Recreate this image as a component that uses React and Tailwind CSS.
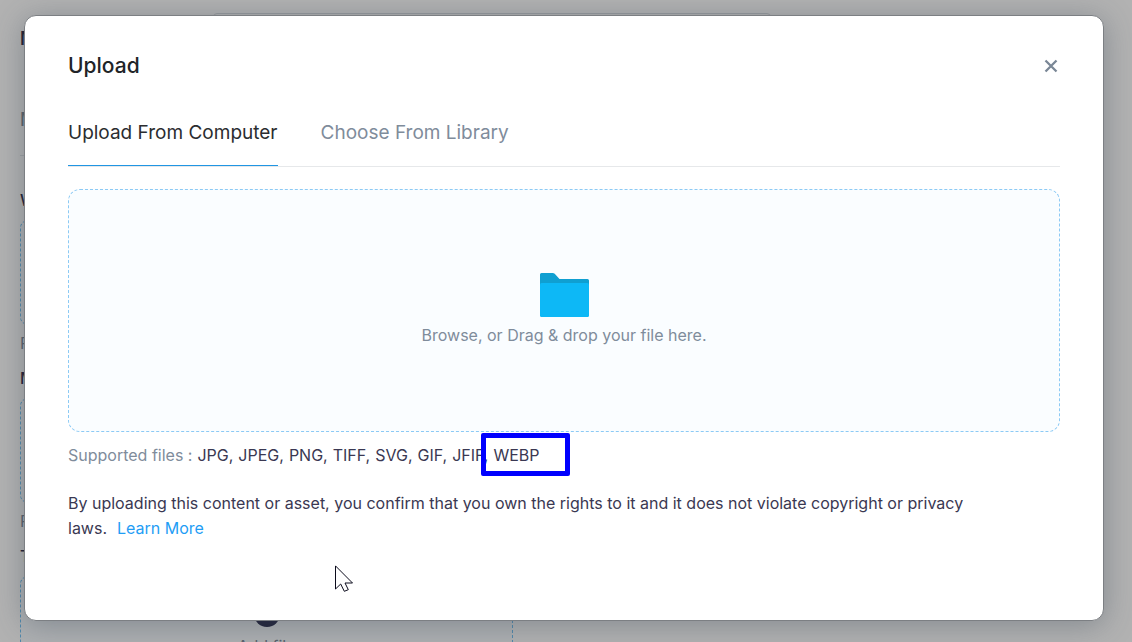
import React, { useState } from 'react';

const FILE_TYPES = ['JPG', 'JPEG', 'PNG', 'TIFF', 'SVG', 'GIF', 'JFIF'];

const TABS = [
  { id: 'computer', label: 'Upload From Computer' },
  { id: 'library', label: 'Choose From Library' },
];

function FolderIcon() {
  return (
    <svg width="49" height="44" viewBox="0 0 49 44" aria-hidden="true">
      <path d="M1.5 0h11.2c.8 0 1.400.3 2 .8L19.500 6H47.500A1.500 1.500 0 0 1 49 7.500V14H0V1.500A1.500 1.500 0 0 1 1.500 0z" fill="#0f9fd1" />
      <rect y="10" width="49" height="34" rx="1.500" fill="#0db8f6" />
    </svg>
  );
}

function CloseIcon() {
  return (
    <svg width="14" height="14" viewBox="0 0 14 14" fill="none" stroke="currentColor" strokeWidth="2.3" aria-hidden="true">
      <path d="M1.500 1.500l11 11M12.500 1.500l-11 11" />
    </svg>
  );
}

function Cursor() {
  return (
    <svg
      className="pointer-events-none absolute top-[565px] left-[335px]"
      width="19"
      height="28"
      viewBox="0 0 19 28"
      aria-hidden="true"
    >
      <path d="M.5 .9V24L5.700 19l3.600 7.300 4-1.600L10 18h7.500z" fill="#fff" stroke="#0b0b1c" strokeWidth="1" />
    </svg>
  );
}

function PageField({ label, note, action }) {
  return (
    <div>
      <div className="h-6 text-base leading-6 font-medium text-[#2d2b4a]">{label}</div>
      <div className="mt-2 flex h-[105px] w-[493px] flex-col items-center rounded-lg border border-dashed border-[#74c3f5] bg-[#fafdff] pt-6">
        {action && (
          <>
            <span className="size-[26px] rounded-full bg-[#2d2f4f]" />
            <span className="mt-[7px] text-base leading-6 text-[#7f8c9b]">{action}</span>
          </>
        )}
      </div>
      <div className="mt-[6px] h-[35px] text-base leading-6 text-[#7f8c9b]">{note}</div>
    </div>
  );
}

// Page that sits behind the dialog
function PageContent() {
  return (
    <div className="h-full overflow-hidden pr-10 pl-5 pt-[13px]" aria-hidden="true">
      <div className="flex">
        <div className="w-[193px] pt-3 text-lg leading-7 font-semibold text-[#2d2b4a]">M</div>
        <div className="h-[52px] w-[558px] rounded-sm border border-[#d9dde2]" />
      </div>
      <div className="mt-[41px] h-[50px] border-b border-[#e3e6e9] text-lg leading-7 font-medium text-[#7f8c9b]">M</div>
      <div className="mt-8">
        <PageField label="W" note="R" />
        <PageField label="M" note="R" />
        <PageField label="T" action="Add file" />
      </div>
    </div>
  );
}

function Tabs({ active, onChange }) {
  return (
    <div role="tablist" className="mt-[38px] flex gap-[43px] border-b border-[#e6e8ea]">
      {TABS.map((tab) => (
        <button
          key={tab.id}
          type="button"
          role="tab"
          aria-selected={active === tab.id}
          onClick={() => onChange(tab.id)}
          className={
            active === tab.id
              ? 'border-b border-[#2196e3] pb-[18px] text-[19px] leading-7 text-[#2b2d30]'
              : 'border-b border-transparent pb-[18px] text-[19px] leading-7 text-[#7f8c9b]'
          }
        >
          {tab.label}
        </button>
      ))}
    </div>
  );
}

function UploadDialog() {
  const [tab, setTab] = useState('computer');

  return (
    <section
      role="dialog"
      aria-labelledby="upload-title"
      className="mt-[15px] mr-7 ml-6 rounded-xl border border-[#7c7f83] bg-white px-[43px] pt-[35px] pb-[79px] shadow-[0_4px_30px_rgba(60,75,90,0.4)]"
    >
      <header className="flex items-center justify-between">
        <h1 id="upload-title" className="text-[21px] leading-[30px] font-medium text-[#212427]">Upload</h1>
        <button type="button" aria-label="Close" className="mr-[2px] text-[#7a8796]">
          <CloseIcon />
        </button>
      </header>

      <Tabs active={tab} onChange={setTab} />

      <label className="mt-[22px] flex h-[243px] cursor-pointer flex-col items-center rounded-xl border border-dashed border-[#8ccaf5] bg-[#fafdff] pt-[83px]">
        <FolderIcon />
        <span className="mt-[6px] text-base leading-6 text-[#7f8c9b]">Browse, or Drag &amp; drop your file here.</span>
        <input type="file" className="sr-only" />
      </label>

      <div className="mt-[11px] flex flex-wrap gap-x-[5px] text-base leading-[25px] text-[#3a3852]">
        <span className="text-[#7f8c9b]">Supported files :</span>
        {FILE_TYPES.map((type) => (
          <span key={type}>{type},</span>
        ))}
        <span className="relative">
          WEBP
          <span className="absolute -top-[10px] -left-3 h-[43px] w-[89px] rounded-xs border-5 border-[#0000fe]" />
        </span>
      </div>

      <p className="mt-[23px] pr-12 text-base leading-[25px] text-[#3a3852]">
        By uploading this content or asset, you confirm that you own the rights to it and it does not violate copyright or privacy laws.
        <a href="#" className="ml-[10px] text-[#1f9df5]">Learn More</a>
      </p>
    </section>
  );
}

function App() {
  return (
    <main className="relative h-screen overflow-hidden bg-white font-[Inter,sans-serif]">
      <PageContent />
      <div className="absolute inset-0 bg-black/30">
        <UploadDialog />
        <Cursor />
      </div>
    </main>
  );
}

export default App;
